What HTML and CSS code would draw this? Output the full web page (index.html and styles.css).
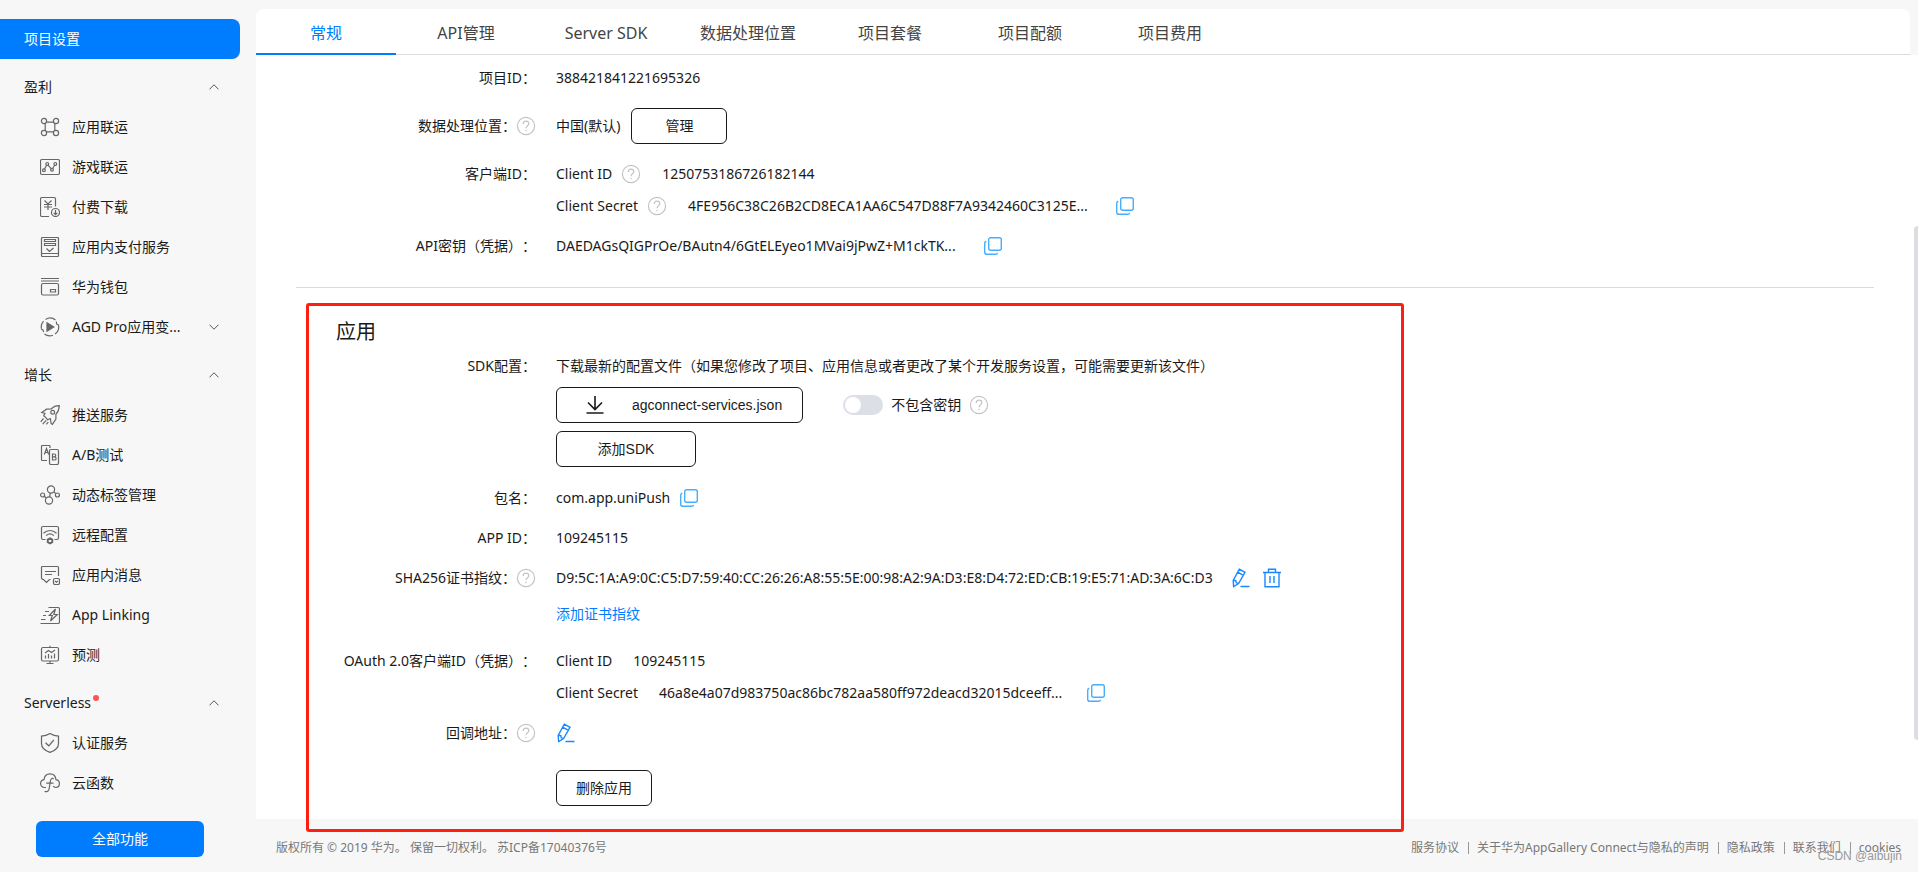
FILE: index.html
```html
<!DOCTYPE html>
<html lang="zh-CN">
<head>
    <meta charset="UTF-8">
    <title>项目设置</title>
    <link rel="stylesheet" href="styles.css">
</head>
<body>
<!-- 公用图标 -->
<svg class="sprite" aria-hidden="true">
    <symbol id="up" viewBox="0 0 10 6"><path d="M.5 5.3 5 .8l4.500 4.500"/></symbol>
    <symbol id="down" viewBox="0 0 10 6"><path d="M.5.7 5 5.200 9.500.7"/></symbol>
    <symbol id="help" viewBox="0 0 20 20">
        <circle cx="10" cy="10" r="8.600"/>
        <path d="M7.200 8c0-1.800 1.200-2.900 2.800-2.900s2.800 1.100 2.800 2.600c0 2-2.800 2.200-2.800 4.600M10 13.800v1.400"/>
    </symbol>
    <symbol id="copy" viewBox="0 0 18 18">
        <rect x="4.700" y=".7" width="12.600" height="12.600" rx="2"/>
        <path d="M2.300 4.300C1.200 4.600.7 5.200.7 6.300v8.900c0 1.300.8 2.100 2.100 2.100h8.700c1.200 0 1.900-.5 2.100-1.500"/>
    </symbol>
    <symbol id="edit" viewBox="0 0 20 20">
        <path d="M8.300 1.200 14 4.300 7.600 15.600 2.600 18.500 2.200 12.300zM6.700 4.100l5.700 3.200M2.200 12.300l2.600.3.4 2.200 2.400.8M9.500 18.500h9"/>
    </symbol>
</svg>

<div class="page">
    <!-- 左侧菜单 -->
    <nav class="sidebar">
        <a class="menu-active" href="#">项目设置</a>

        <div class="group">
            <button class="group-title" type="button"><span>盈利</span><svg class="arrow"><use href="#up"/></svg></button>
            <a class="item" href="#">
                <svg class="icon" viewBox="0 0 20 20"><circle cx="4" cy="4" r="2.600"/><circle cx="16" cy="4" r="2.600"/><circle cx="4" cy="16" r="2.600"/><circle cx="16" cy="16" r="2.600"/><path d="M6.500 5.200h7M6.500 14.800h7M5.200 6.500v7M14.800 6.500v7"/></svg>
                <span>应用联运</span>
            </a>
            <a class="item" href="#">
                <svg class="icon" viewBox="0 0 20 20"><rect x=".5" y="2.500" width="19" height="15" rx="1.500"/><circle cx="3.900" cy="13.300" r="1.400"/><circle cx="7.200" cy="6.900" r="1.400"/><circle cx="12" cy="12.800" r="1.400"/><circle cx="15.300" cy="6.900" r="1.400"/><path d="M4.500 12 6.600 8.200M8 8.100l3.200 3.500M12.600 11.500l2.100-3.300"/></svg>
                <span>游戏联运</span>
            </a>
            <a class="item" href="#">
                <svg class="icon" viewBox="0 0 20 20"><path d="M9 19.500H2A1.500 1.500 0 0 1 .5 18V2A1.500 1.500 0 0 1 2 .5h12A1.500 1.500 0 0 1 15.500 2v7.500M4.500 3.500 8 7l3.500-3.500M4 7.500h8M4 10h8M8 7v6"/><circle cx="15.500" cy="15.500" r="4"/><path d="M15.500 13v4.500M13.700 15.900l1.800 1.800 1.800-1.800"/></svg>
                <span>付费下载</span>
            </a>
            <a class="item" href="#">
                <svg class="icon" viewBox="0 0 20 20"><rect x="1.500" y=".5" width="17" height="19" rx="1"/><path d="M1.500 16.500h17M4.500 2.500h11v2h-11zM4.500 6.500h11v2h-11zM6.500 11.500l3 3 4-3.500"/></svg>
                <span>应用内支付服务</span>
            </a>
            <a class="item" href="#">
                <svg class="icon" viewBox="0 0 20 20"><path d="M1 1.500h18M1 4h18"/><rect x="1.500" y="6.500" width="17" height="11.500" rx="1.500"/><path d="M10.500 12.500h5v2.500h-5z"/></svg>
                <span>华为钱包</span>
            </a>
            <a class="item" href="#">
                <svg class="icon" viewBox="0 0 20 20"><path d="M5.500 2.500A8.700 8.700 0 0 1 15.500 3M18.600 8.500A8.700 8.700 0 0 1 15 17M13 18.200A8.700 8.700 0 0 1 4.500 17M1.400 11.500A8.700 8.700 0 0 1 3.500 4.200M16.300 4.500l.4 2.700 2.400 1M1 12l1.800.8.900 2.300"/><path class="solid" d="M7 5.800v8.400l6.800-4.200z"/></svg>
                <span>AGD Pro应用变...</span>
                <svg class="arrow"><use href="#down"/></svg>
            </a>
        </div>

        <div class="group">
            <button class="group-title" type="button"><span>增长</span><svg class="arrow"><use href="#up"/></svg></button>
            <a class="item" href="#">
                <svg class="icon" viewBox="0 0 20 20"><path d="M19.300.7c-4.300 0-6 1.100-8.100 3.300L6.500 4.200 1.800 7.500l3.200.9-1.300 2.400 2 1.600 1.800 2.300 2.800-1.200.8 4.900 1.300 1 3.500-5.400V9.400c2.700-3 3.300-4.800 3.400-8.700z"/><circle cx="12.700" cy="7.200" r="1.900"/><path d="M3.500 13.500.8 16.800M6.200 15.400 2.700 19.200M8.200 17l-1.800 2.400"/></svg>
                <span>推送服务</span>
            </a>
            <a class="item" href="#">
                <svg class="icon" viewBox="0 0 20 20"><path d="M7 15.500H2.500a1 1 0 0 1-1-1v-13a1 1 0 0 1 1-1H9a1 1 0 0 1 1 1V3"/><rect x="9.500" y="4.500" width="9" height="15" rx="1.500"/><path d="M4.300 9.500 6.500 3.500l2.200 6M5 7.500h3M12.500 9v6h2a1.600 1.600 0 0 0 0-3.200h-2 1.800a1.400 1.400 0 0 0 0-2.800z"/></svg>
                <span>A/B测试</span>
            </a>
            <a class="item" href="#">
                <svg class="icon" viewBox="0 0 20 20"><circle cx="11" cy="4.500" r="3.600"/><circle cx="9" cy="15.500" r="3.600"/><circle cx="2.600" cy="10" r="2"/><circle cx="17.400" cy="10" r="2"/><path d="M4.300 11.200l2 1.800M10.300 8.100l-.7 3.800M13.800 6.800l2.100 1.800"/></svg>
                <span>动态标签管理</span>
            </a>
            <a class="item" href="#">
                <svg class="icon" viewBox="0 0 20 20"><path d="M5.500 14.500H3A1.500 1.500 0 0 1 1.500 13V3A1.500 1.500 0 0 1 3 1.500h14A1.500 1.500 0 0 1 18.500 3v10a1.500 1.500 0 0 1-1.500 1.500h-2.500M3.500 8.200c3.800-3.600 9.200-3.600 13 0M6.200 10.600c2.300-2 5.300-2 7.600 0"/><path class="bold" d="m10 13.400 2.200 1.200v2.600L10 18.400l-2.200-1.200v-2.600z"/></svg>
                <span>远程配置</span>
            </a>
            <a class="item" href="#">
                <svg class="icon" viewBox="0 0 20 20"><path d="M10.500 14.500h-1L6.500 17.500l-3-3a2 2 0 0 1-2-1.500V2.500a1 1 0 0 1 1-1h15a1 1 0 0 1 1 1V11M5 6.500h11M5 9.500h7"/><rect x="13.500" y="13.500" width="6" height="6" rx="1.500"/><path d="M15 16l1.500 1.300L18 16"/></svg>
                <span>应用内消息</span>
            </a>
            <a class="item" href="#">
                <svg class="icon" viewBox="0 0 20 20"><path d="M8.500 2.500H18A1.500 1.500 0 0 1 19.500 4v13a1.500 1.500 0 0 1-1.500 1.500H.5M5 6.500h4M3 10.500h3M1 14.500h4.500M15.500 4 9.300 10.500h3L10.500 16l6.800-6.500h-3.500z"/></svg>
                <span>App Linking</span>
            </a>
            <a class="item" href="#">
                <svg class="icon" viewBox="0 0 20 20"><rect x="1.500" y="2.500" width="17" height="13.500" rx="1.500"/><path d="M10 .8v1.700M10 16v2.500M6.500 18.500h7M5.500 10.500v3M8.500 9v4.500M11.500 10.500v3M14.500 8.500v5M5 8l3.500-2.500 3 2 3.500-2.500"/></svg>
                <span>预测</span>
            </a>
        </div>

        <div class="group">
            <button class="group-title" type="button"><span class="dot">Serverless</span><svg class="arrow"><use href="#up"/></svg></button>
            <a class="item" href="#">
                <svg class="icon" viewBox="0 0 20 20"><path d="M10 .6c2.400 1.500 5.300 2.500 8.500 2.600v7.300c0 4-3.500 7.300-8.500 8.900-5-1.600-8.500-4.900-8.500-8.900V3.200C4.700 3.100 7.600 2.100 10 .6zM5.500 9.800l3.300 3 5-5.800"/></svg>
                <span>认证服务</span>
            </a>
            <a class="item" href="#">
                <svg class="icon" viewBox="0 0 20 20"><path d="M6 14.500H4.500C2.200 14.500.6 12.700.6 10.600c0-2 1.500-3.600 3.400-3.900C4.400 3.300 6.800.9 10 .9s5.600 2.400 6 5.800c1.900.3 3.400 1.900 3.400 3.900 0 2.200-1.600 3.900-3.700 3.900-1.200 0-2-.6-2.400-1.400M13.800 5.600c-2.200-.7-3.100.4-3.500 2.800L9.200 15.500c-.5 2.600-2 3.700-4.600 2.900M6.200 10.200h7.300"/></svg>
                <span>云函数</span>
            </a>
        </div>

        <button class="all-btn" type="button">全部功能</button>
    </nav>

    <!-- 右侧内容 -->
    <div class="main">
        <div class="tabs">
            <a class="tab tab-on" href="#">常规</a>
            <a class="tab" href="#">API管理</a>
            <a class="tab" href="#">Server SDK</a>
            <a class="tab" href="#">数据处理位置</a>
            <a class="tab" href="#">项目套餐</a>
            <a class="tab" href="#">项目配额</a>
            <a class="tab" href="#">项目费用</a>
        </div>

        <div class="content">
            <section class="project">
                <div class="row">
                    <div class="label">项目ID：</div>
                    <div class="value"><div class="line">388421841221695326</div></div>
                </div>
                <div class="row row-big">
                    <div class="label">数据处理位置：<svg class="help"><use href="#help"/></svg></div>
                    <div class="value">
                        <div class="line">中国(默认)<button class="btn btn-small" type="button">管理</button></div>
                    </div>
                </div>
                <div class="row">
                    <div class="label">客户端ID：</div>
                    <div class="value">
                        <div class="line">Client ID<svg class="help"><use href="#help"/></svg><span class="after">1250753186726182144</span></div>
                        <div class="line">Client Secret<svg class="help"><use href="#help"/></svg><span class="after secret">4FE956C38C26B2CD8ECA1AA6C547D88F7A9342460C3125E...</span><button class="copy" type="button" aria-label="复制"><svg><use href="#copy"/></svg></button></div>
                    </div>
                </div>
                <div class="row">
                    <div class="label">API密钥（凭据）：</div>
                    <div class="value">
                        <div class="line"><span class="secret">DAEDAGsQIGPrOe/BAutn4/6GtELEyeo1MVai9jPwZ+M1ckTK...</span><button class="copy" type="button" aria-label="复制"><svg><use href="#copy"/></svg></button></div>
                    </div>
                </div>
            </section>

            <section class="app">
                <h2>应用</h2>
                <div class="row row-tall">
                    <div class="label">SDK配置：</div>
                    <div class="value">
                        <div class="line">下载最新的配置文件（如果您修改了项目、应用信息或者更改了某个开发服务设置，可能需要更新该文件）</div>
                        <div class="sdk">
                            <button class="btn btn-file" type="button">
                                <svg viewBox="0 0 18 18"><path d="M9 0v13M2 6.500l7 7 7-7M.5 17h17"/></svg>
                                agconnect-services.json
                            </button>
                            <label class="switch"><input type="checkbox">不包含密钥</label>
                            <svg class="help"><use href="#help"/></svg>
                        </div>
                        <button class="btn btn-sdk" type="button">添加SDK</button>
                    </div>
                </div>
                <div class="row">
                    <div class="label">包名：</div>
                    <div class="value"><div class="line">com.app.uniPush<button class="copy copy-near" type="button" aria-label="复制"><svg><use href="#copy"/></svg></button></div></div>
                </div>
                <div class="row">
                    <div class="label">APP ID：</div>
                    <div class="value"><div class="line">109245115</div></div>
                </div>
                <div class="row row-tall">
                    <div class="label">SHA256证书指纹：<svg class="help"><use href="#help"/></svg></div>
                    <div class="value">
                        <div class="line">
                            <span class="finger">D9:5C:1A:A9:0C:C5:D7:59:40:CC:26:26:A8:55:5E:00:98:A2:9A:D3:E8:D4:72:ED:CB:19:E5:71:AD:3A:6C:D3</span>
                            <button class="tool" type="button" aria-label="编辑"><svg><use href="#edit"/></svg></button>
                            <button class="tool" type="button" aria-label="删除"><svg viewBox="0 0 20 20"><path d="M1 4.500h18M6.500 4.500V1.200h7v3.300M3 4.500v14.300h14V4.500M8 8v7M12 8v7"/></svg></button>
                        </div>
                        <div class="line line-link"><a href="#">添加证书指纹</a></div>
                    </div>
                </div>
                <div class="row">
                    <div class="label">OAuth 2.0客户端ID（凭据）：</div>
                    <div class="value">
                        <div class="line">Client ID<span class="after">109245115</span></div>
                        <div class="line">Client Secret<span class="after secret">46a8e4a07d983750ac86bc782aa580ff972deacd32015dceeff...</span><button class="copy" type="button" aria-label="复制"><svg><use href="#copy"/></svg></button></div>
                    </div>
                </div>
                <div class="row">
                    <div class="label">回调地址：<svg class="help"><use href="#help"/></svg></div>
                    <div class="value"><div class="line"><button class="tool tool-first" type="button" aria-label="编辑"><svg><use href="#edit"/></svg></button></div></div>
                </div>
                <div class="row row-del">
                    <div class="label"></div>
                    <div class="value"><button class="btn btn-small" type="button">删除应用</button></div>
                </div>
                <!-- 红色标注框 -->
                <div class="mark"></div>
            </section>
            <div class="scrollbar"></div>
        </div>

        <footer class="footer">
            <div>版权所有 © 2019 华为。 保留一切权利。 苏ICP备17040376号</div>
            <div class="links">
                <a href="#">服务协议</a>
                <a href="#">关于华为AppGallery Connect与隐私的声明</a>
                <a href="#">隐私政策</a>
                <a href="#">联系我们</a>
                <a href="#">cookies</a>
            </div>
            <span class="watermark">CSDN @aibujin</span>
        </footer>
    </div>
</div>
</body>
</html>
```
FILE: styles.css
```css
* {
    margin: 0;
    padding: 0;
    box-sizing: border-box;
}

body {
    font: 14px/20px "Noto Sans", "Noto Sans CJK SC", sans-serif;
    color: #1a1a1a;
    background-color: #f7f7f7;
    /*全角标点不压缩*/
    text-spacing-trim: space-all;
}

a {
    color: inherit;
    text-decoration: none;
}

button {
    font: inherit;
    color: inherit;
    background: none;
    border: 0;
    cursor: pointer;
}

svg {
    display: block;
    flex: none;
    fill: none;
    stroke: currentColor;
}

.sprite {
    position: absolute;
    width: 0;
    height: 0;
}

.page {
    display: flex;
    min-height: 100vh;
}

/*左侧菜单*/
.sidebar {
    flex: none;
    width: 256px;
    padding: 19px 16px 15px 0;
}

.menu-active {
    display: block;
    padding-left: 24px;
    line-height: 40px;
    color: #fff;
    background-color: #007dff;
    border-radius: 0 8px 8px 0;
}

.group {
    margin-top: 8px;
}

.group-title,
.item {
    display: flex;
    align-items: center;
    width: 100%;
    height: 40px;
    padding: 0 21px 0 24px;
}

.item {
    gap: 12px;
    padding-left: 40px;
}

.icon {
    width: 20px;
    height: 20px;
    color: #666;
    stroke-width: 1.2;
}

.icon .solid {
    fill: #666;
}

.icon .bold {
    stroke-width: 2;
}

.arrow {
    width: 10px;
    height: 6px;
    margin-left: auto;
    color: #555;
}

.dot {
    position: relative;
}

/*未读红点*/
.dot::after {
    content: "";
    position: absolute;
    top: 2px;
    right: -8px;
    width: 6px;
    height: 6px;
    border-radius: 50%;
    background-color: #fa5555;
}

.all-btn {
    display: block;
    width: 168px;
    height: 36px;
    margin: 18px 0 0 36px;
    color: #fff;
    background-color: #007dff;
    border-radius: 6px;
}

/*右侧*/
.main {
    flex: 1;
    display: flex;
    flex-direction: column;
    min-width: 0;
    padding-top: 9px;
}

.tabs {
    display: flex;
    flex: none;
    height: 46px;
    margin-right: 8px;
    background-color: #fff;
    border-bottom: 1px solid #dcdcdc;
    border-radius: 8px 8px 0 0;
}

.tab {
    min-width: 140px;
    height: 46px;
    padding: 0 24px;
    font-size: 16px;
    line-height: 48px;
    text-align: center;
    color: #444;
}

.tab-on {
    color: #007dff;
    border-bottom: 2px solid #007dff;
}

.content {
    flex: 1;
    position: relative;
    padding: 7px 44px 12px 40px;
    background-color: #fff;
}

.project {
    padding-bottom: 17px;
    border-bottom: 1px solid #dcdcdc;
}

.app {
    position: relative;
    padding-top: 30px;
}

.app h2 {
    padding-left: 40px;
    margin-bottom: 4px;
    font-size: 20px;
    font-weight: normal;
    line-height: 28px;
}

.row {
    display: flex;
    gap: 20px;
    margin-bottom: 8px;
    white-space: nowrap;
}

.row-big {
    padding: 8px 0;
}

.row-tall {
    margin-bottom: 15px;
}

.row-del {
    padding-top: 13px;
    margin-bottom: 0;
}

.label {
    display: flex;
    align-items: center;
    justify-content: flex-end;
    width: 240px;
    height: 32px;
}

.line {
    display: flex;
    align-items: center;
    height: 32px;
}

.line-link {
    margin-top: 4px;
    color: #007dff;
}

.help {
    width: 20px;
    height: 20px;
    color: #c4c4c4;
    stroke-width: 1.2;
}

.line .help {
    margin-left: 9px;
}

.after {
    margin-left: 21px;
}

.secret {
    min-width: 412px;
}

.finger {
    min-width: 664px;
}

.copy {
    margin-left: 16px;
    color: #47aefd;
}

.copy svg {
    width: 18px;
    height: 18px;
    stroke-width: 1.4;
}

.copy-near {
    margin-left: 10px;
}

.tool {
    margin-left: 11px;
    color: #1a88ff;
}

.tool-first {
    margin-left: 0;
}

.tool svg {
    width: 20px;
    height: 20px;
    stroke-width: 1.4;
}

.btn {
    height: 36px;
    font-family: "Liberation Sans", "Noto Sans CJK SC", sans-serif;
    background-color: #fff;
    border: 1px solid #1a1a1a;
    border-radius: 6px;
}

.btn-small {
    width: 96px;
}

.line .btn-small {
    margin-left: 11px;
}

.btn-sdk {
    width: 140px;
}

.btn-file {
    display: flex;
    align-items: center;
    gap: 28px;
    padding: 0 20px 0 29px;
}

.btn-file svg {
    width: 18px;
    height: 18px;
    stroke-width: 1.6;
}

.sdk {
    display: flex;
    align-items: center;
    margin: 5px 0 8px;
}

.switch {
    display: flex;
    align-items: center;
    gap: 8px;
    margin: 0 8px 0 40px;
}

/*开关*/
.switch input {
    appearance: none;
    width: 40px;
    height: 20px;
    padding: 2px;
    background-color: #dcdfe6;
    border-radius: 10px;
}

.switch input::before {
    content: "";
    display: block;
    width: 16px;
    height: 16px;
    border-radius: 50%;
    background-color: #fff;
}

.switch input:checked {
    background-color: #007dff;
}

.switch input:checked::before {
    margin-left: 20px;
}

/*标注框盖在内容和页脚上面*/
.mark {
    position: absolute;
    top: 15px;
    left: 10px;
    bottom: -26px;
    width: 1098px;
    border: 3px solid #ff1e12;
    border-radius: 3px;
    z-index: 1;
    pointer-events: none;
}

.scrollbar {
    position: absolute;
    top: 171px;
    right: 0;
    width: 4px;
    height: 514px;
    border-radius: 4px 0 0 4px;
    background-color: #dcdde0;
}

.footer {
    position: relative;
    display: flex;
    flex: none;
    align-items: center;
    justify-content: space-between;
    height: 53px;
    padding: 4px 17px 0 20px;
    font-size: 12px;
    color: #777;
}

.links {
    display: flex;
    align-items: center;
}

.links a {
    line-height: 12px;
}

.links a + a {
    margin-left: 9px;
    padding-left: 8px;
    border-left: 1px solid #999;
}

.watermark {
    position: absolute;
    right: 16px;
    bottom: 6px;
    font-family: "Liberation Sans", sans-serif;
    color: #999;
}
```
